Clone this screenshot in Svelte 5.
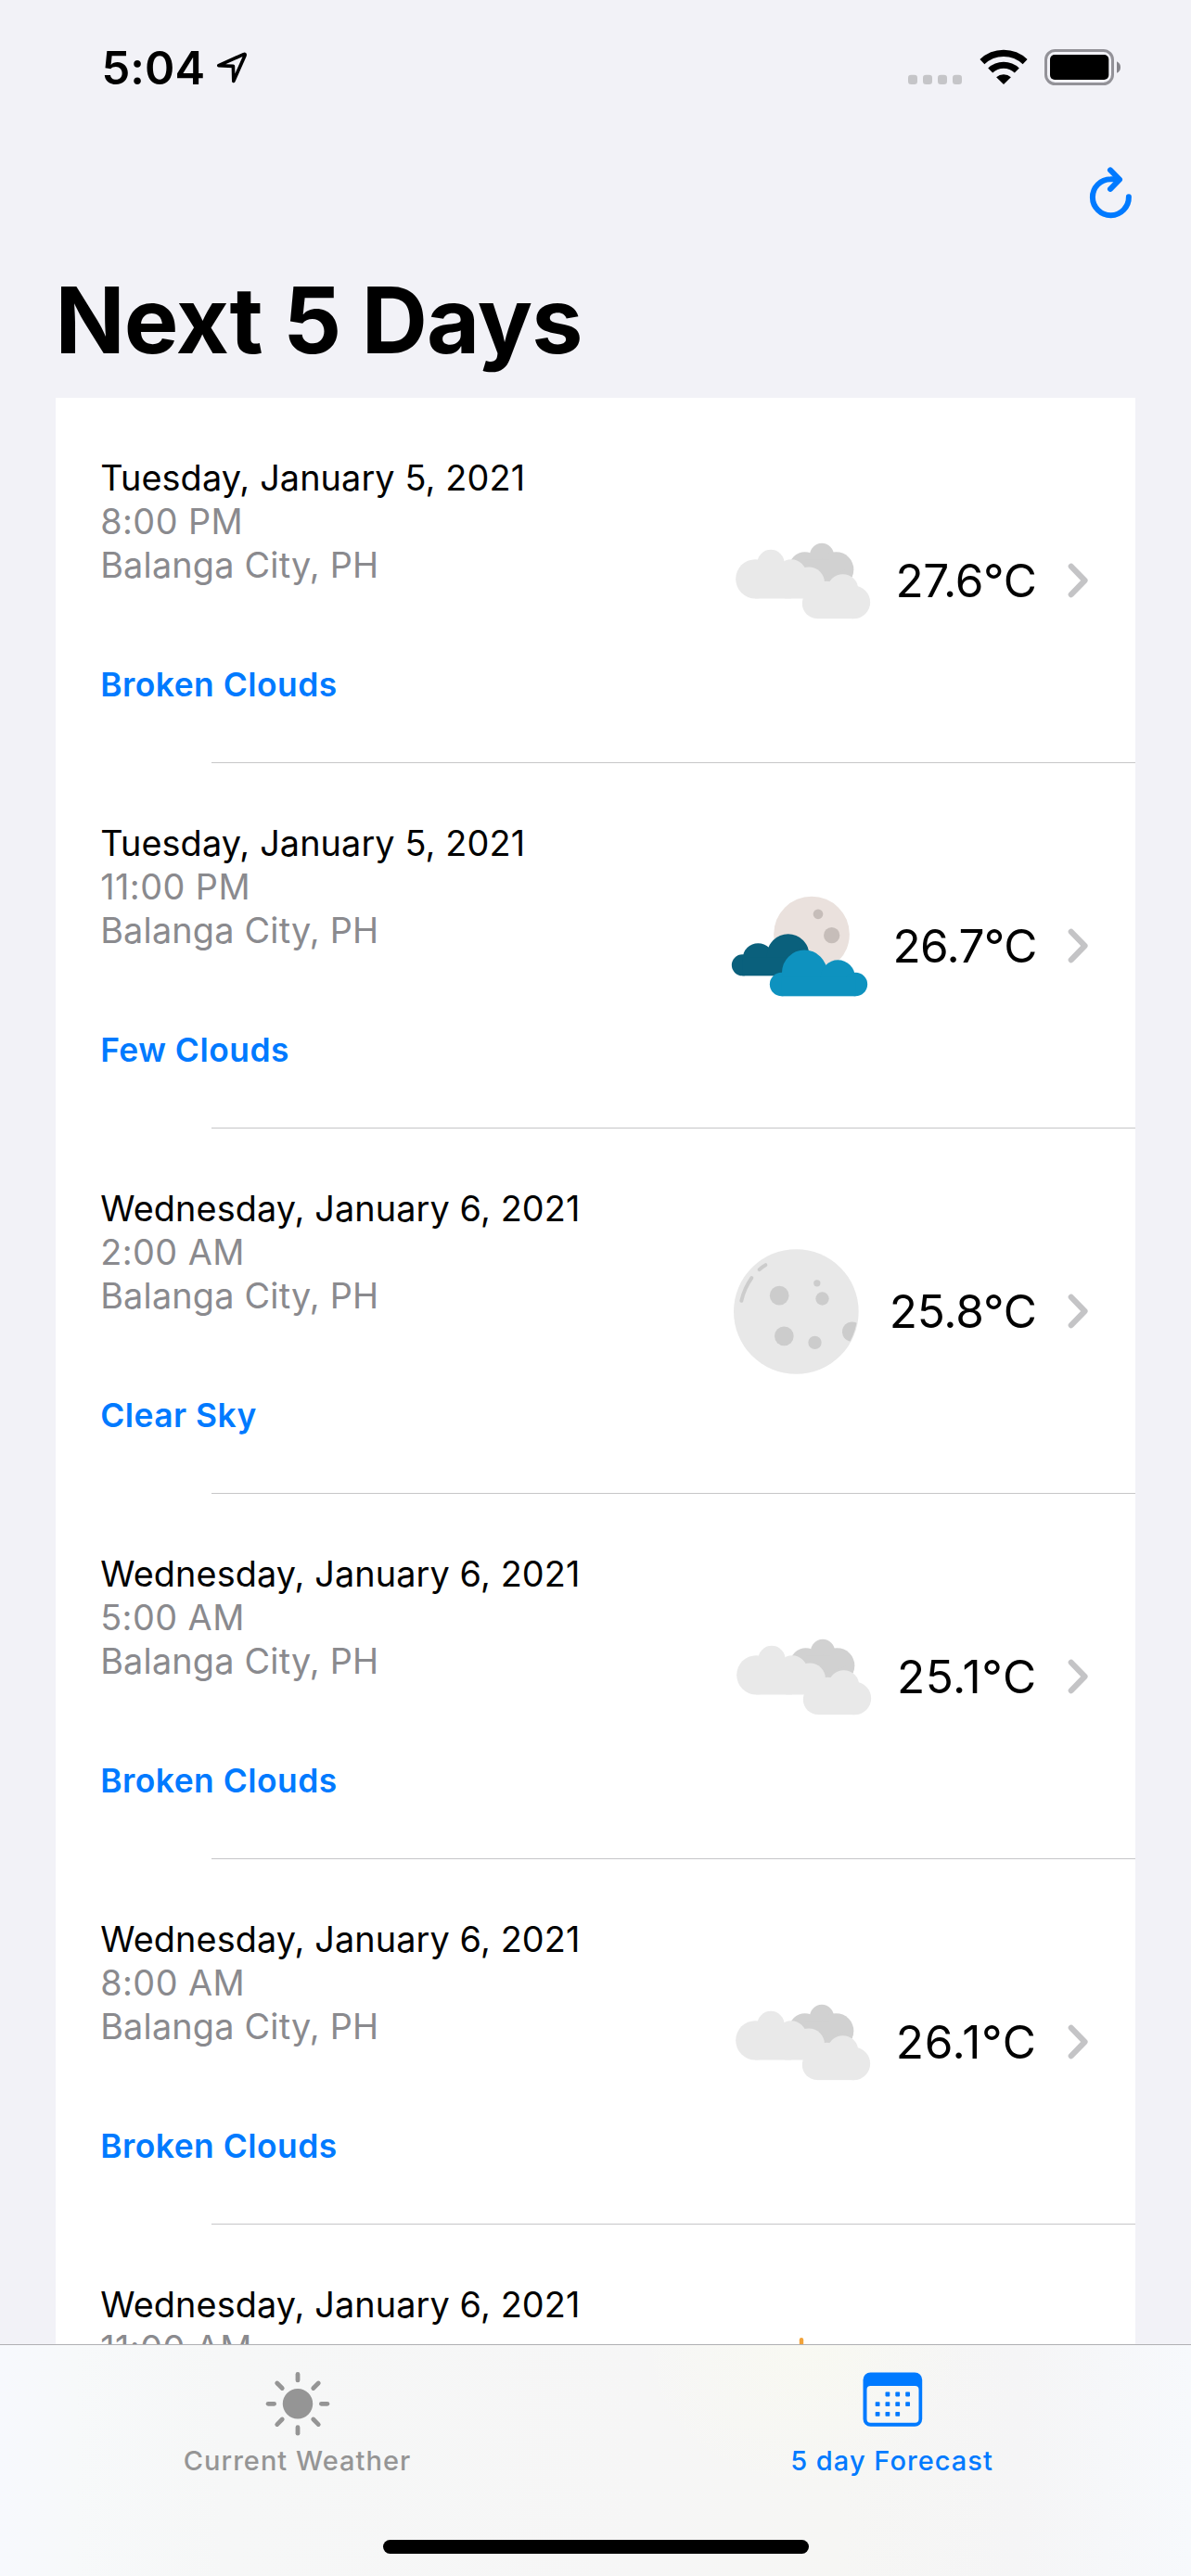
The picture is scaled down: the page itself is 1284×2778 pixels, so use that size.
<script>
  const place = 'Balanga City, PH';

  const forecast = [
    { date: 'Tuesday, January 5, 2021', time: '8:00 PM', sky: 'Broken Clouds', icon: 'broken', temp: '27.6°C', tracking: -0.26 },
    { date: 'Tuesday, January 5, 2021', time: '11:00 PM', sky: 'Few Clouds', icon: 'few', temp: '26.7°C', tracking: -0.62 },
    { date: 'Wednesday, January 6, 2021', time: '2:00 AM', sky: 'Clear Sky', icon: 'moon', temp: '25.8°C', tracking: -0.2 },
    { date: 'Wednesday, January 6, 2021', time: '5:00 AM', sky: 'Broken Clouds', icon: 'broken', temp: '25.1°C', tracking: 0.6 },
    { date: 'Wednesday, January 6, 2021', time: '8:00 AM', sky: 'Broken Clouds', icon: 'broken', temp: '26.1°C', tracking: 0.74 },
    { date: 'Wednesday, January 6, 2021', time: '11:00 AM', sky: 'Clear Sky', icon: 'sun', temp: '27.6°C', tracking: 0 }
  ];

  const rays = [0, 45, 90, 135, 180, 225, 270, 315];

  const calendarDots = [
    [956.4, 2582], [967.2, 2582], [978.1, 2582],
    [945.6, 2592.6], [956.4, 2592.6], [967.2, 2592.6], [978.1, 2592.6],
    [945.6, 2603.4], [956.4, 2603.4], [967.2, 2603.4]
  ];
</script>

<div class="screen">
  <div class="status">
    <span class="clock">5:04</span>
    <svg class="location" width="36" height="60" viewBox="232 44 36 60">
      <path d="M235.8 70.7 L262.6 58.6 Q264.7 57.9 264 60 L251.8 87.5 L251.4 71.4 Z" />
    </svg>
    <svg class="signal" width="58" height="60" viewBox="979 44 58 60">
      <rect x="979" y="80.7" width="10" height="10.3" rx="3.3" />
      <rect x="995" y="80.7" width="10" height="10.3" rx="3.3" />
      <rect x="1011" y="80.7" width="10" height="10.3" rx="3.3" />
      <rect x="1027" y="80.7" width="10" height="10.3" rx="3.3" />
    </svg>
    <svg class="wifi" width="52" height="60" viewBox="1055.5 44 52 60">
      <path class="arc" d="M1058.4 66.7 A33.5 33.5 0 0 1 1104.6 66.7" />
      <path class="arc" d="M1067.2 76 A20.7 20.7 0 0 1 1095.8 76" />
      <path d="M1081.5 91 L1073.6 83.2 A11.7 11.7 0 0 1 1089.4 83.2 Z" />
    </svg>
    <svg class="battery" width="83" height="60" viewBox="1126 44 83 60">
      <rect class="shell" x="1127.5" y="54.5" width="72" height="36" rx="10" />
      <rect x="1132" y="59" width="63.3" height="27" rx="5" />
      <path class="nub" d="M1204 66.3 Q1208 68.3 1208 72.5 Q1208 76.8 1204 78.8 Z" />
    </svg>
  </div>

  <div class="toolbar">
    <svg class="refresh" width="52" height="64" viewBox="1172 176 52 64">
      <path d="M1216.9 212.3 A19.5 19.5 0 1 1 1197.3 193.2 Q1202 193 1206 193.7" />
      <path d="M1197 183.4 L1207 193.6 L1197 203.8" />
    </svg>
  </div>

  <h1>Next 5 Days</h1>

  <ul class="list">
    {#each forecast as item}
      <li>
        <div class="row">
          <div class="info">
            <span class="date">{item.date}</span>
            <span class="sub time">{item.time}</span>
            <span class="sub">{place}</span>
            <span class="sky">{item.sky}</span>
          </div>
          {#if item.icon === 'broken'}
            <svg class="weather" viewBox="154 31.5 450 450">
              <g fill="#d1d1d1">
                <circle cx="439" cy="175" r="39" />
                <circle cx="384" cy="214" r="50" />
                <circle cx="485" cy="221" r="57" />
                <rect x="384" y="190" width="80" height="80" />
                <path d="M440 250 L541 212 Q543 226 537 243 L500 300 Z" />
              </g>
              <g fill="#e9e9e9">
                <circle cx="224" cy="251.5" r="63.5" />
                <circle cx="274" cy="201" r="44" />
                <circle cx="340" cy="237" r="49" />
                <circle cx="397" cy="264" r="51" />
                <rect x="224" y="200" width="116" height="115" />
                <rect x="320" y="250" width="90" height="65" />
                <circle cx="424" cy="331" r="48.5" />
                <circle cx="455" cy="300" r="41" />
                <circle cx="507" cy="286" r="50" />
                <circle cx="542" cy="327" r="53.5" />
                <rect x="424" y="290" width="118" height="90" />
              </g>
            </svg>
          {:else if item.icon === 'few'}
            <svg class="weather" viewBox="144 43.5 450 450">
              <circle cx="405" cy="231" r="122.5" fill="#eae1dd" />
              <g fill="#c6bdb9">
                <circle cx="426" cy="166" r="16" />
                <circle cx="470" cy="234.5" r="26" />
              </g>
              <g fill="#0a607c">
                <circle cx="181" cy="331" r="34.5" />
                <circle cx="232" cy="310" r="50" />
                <circle cx="329" cy="299" r="68.5" />
                <rect x="181" y="305" width="160" height="60.5" />
              </g>
              <g fill="#0e92bf">
                <circle cx="308" cy="393" r="38.5" />
                <circle cx="382" cy="355" r="73" />
                <circle cx="490" cy="370" r="55.5" />
                <circle cx="547" cy="393" r="38.5" />
                <rect x="308" y="370" width="239" height="61.5" />
              </g>
            </svg>
          {:else if item.icon === 'moon'}
            <svg class="weather" viewBox="134 85.5 450 450">
              <clipPath id="disc"><circle cx="357" cy="312" r="199" /></clipPath>
              <circle cx="357" cy="312" r="202" fill="#e8e8e8" />
              <g fill="#cccccc">
                <circle cx="302.5" cy="260" r="31" />
                <circle cx="424.5" cy="220" r="11" />
                <circle cx="441.5" cy="270" r="21.5" />
                <circle cx="318" cy="391" r="31" />
                <circle cx="417.5" cy="412" r="21.5" />
                <circle cx="538" cy="377" r="32" clip-path="url(#disc)" />
              </g>
              <g fill="none" stroke="#cccccc" stroke-width="12" stroke-linecap="round">
                <path d="M180 277 Q189 237 213 203" />
                <path d="M238 176 Q247 167 258 161" />
              </g>
            </svg>
          {:else}
            <svg class="weather" viewBox="0 0 150 150">
              <g stroke="#f2a33a" stroke-width="4.4" stroke-linecap="round">
                {#each rays as angle}
                  <line x1="75" y1="2.2" x2="75" y2="22" transform="rotate({angle} 75 75)" />
                {/each}
              </g>
              <circle cx="75" cy="75" r="40" fill="#f2a33a" />
            </svg>
          {/if}
          <span class="temp" style="letter-spacing: {item.tracking}px">{item.temp}</span>
          <svg class="chevron" width="24" height="44" viewBox="0 0 24 44">
            <path d="M4.8 6.8 L19.5 22 L4.8 37.2" />
          </svg>
        </div>
        <div class="separator"></div>
      </li>
    {/each}
  </ul>

  <nav class="tabbar">
    <div class="tabs">
      <div class="tab">
        <svg width="72" height="76" viewBox="284.5 2553 72 76">
          <circle cx="320.5" cy="2592.3" r="16.2" fill="currentColor" />
          <g stroke="currentColor" stroke-width="4.8" stroke-linecap="round">
            {#each rays as angle}
              <line
                x1="320.5"
                y1={angle % 90 ? 2560.8 : 2560.4}
                x2="320.5"
                y2={angle % 90 ? 2568.6 : 2566.9}
                transform="rotate({angle} 320.5 2592.3)"
              />
            {/each}
          </g>
        </svg>
        <span>Current Weather</span>
      </div>
      <div class="tab active">
        <svg width="72" height="76" viewBox="925.5 2553 72 76">
          <path
            fill="currentColor"
            fill-rule="evenodd"
            d="M938 2558.5 h47.7 a8 8 0 0 1 8 8 v42.3 a8 8 0 0 1 -8 8 h-47.7 a8 8 0 0 1 -8 -8 v-42.3 a8 8 0 0 1 8 -8 Z M938 2573 a4 4 0 0 0 -4 4 v31.7 a4 4 0 0 0 4 4 h48 a4 4 0 0 0 4 -4 v-31.7 a4 4 0 0 0 -4 -4 Z"
          />
          {#each calendarDots as [x, y]}
            <rect x={x - 2.4} y={y - 2.4} width="4.8" height="4.8" rx="0.8" fill="currentColor" />
          {/each}
        </svg>
        <span>5 day Forecast</span>
      </div>
    </div>
    <div class="home-indicator"></div>
  </nav>
</div>

<style>
  :global(body) {
    margin: 0;
    background: #f2f2f7;
  }

  .screen {
    display: flex;
    flex-direction: column;
    width: 1284px;
    height: 2778px;
    overflow: hidden;
    background: #f2f2f7;
    color: #000;
    font-family: Inter, 'Liberation Sans', sans-serif;
  }

  svg {
    display: block;
    flex: none;
  }

  .status {
    display: flex;
    flex: none;
    height: 60px;
    padding: 44px 75px 0 109.4px;
  }

  .clock {
    width: 122.6px;
    font-size: 49px;
    font-weight: 600;
    line-height: 59px;
    letter-spacing: 0.1px;
  }

  .location {
    fill: none;
    stroke: #000;
    stroke-width: 3.6;
    stroke-linejoin: round;
  }

  .signal {
    margin-left: auto;
    fill: #c5c5c8;
  }

  .wifi {
    margin-left: 18.5px;
  }

  .arc {
    fill: none;
    stroke: #000;
    stroke-width: 7.2;
  }

  .battery {
    margin-left: 18.5px;
  }

  .shell {
    fill: none;
    stroke: #939298;
    stroke-width: 3;
  }

  .nub {
    fill: #85848a;
  }

  .toolbar {
    display: flex;
    flex: none;
    justify-content: flex-end;
    height: 109px;
    padding: 72px 60px 0 0;
  }

  .refresh {
    fill: none;
    stroke: #007aff;
    stroke-width: 6;
    stroke-linecap: round;
    stroke-linejoin: round;
  }

  h1 {
    flex: none;
    margin: 0 0 24px 59.6px;
    font-size: 98.6px;
    font-weight: 700;
    line-height: 120px;
    letter-spacing: -0.88px;
  }

  .list {
    flex: 1;
    min-height: 0;
    margin: 0 60px;
    padding: 0;
    overflow: hidden;
    background: #fff;
    list-style: none;
  }

  .row {
    display: flex;
    align-items: center;
    box-sizing: border-box;
    height: 393px;
    padding: 0 50px 0 48.2px;
  }

  .separator {
    height: 1px;
    margin-left: 168px;
    background: #c6c6c8;
  }

  .info {
    display: flex;
    flex: 1;
    flex-direction: column;
    align-self: flex-start;
    padding-top: 63px;
    font-size: 37.8px;
    line-height: 47px;
    white-space: nowrap;
  }

  .date {
    letter-spacing: 0.12px;
  }

  .sub {
    color: #8a8a8e;
    letter-spacing: 0.2px;
  }

  .time {
    letter-spacing: 0.45px;
  }

  .sky {
    margin-top: 84px;
    color: #007aff;
    font-size: 35.4px;
    font-weight: 600;
    line-height: 43px;
    letter-spacing: 0.5px;
  }

  .weather {
    width: 150px;
    height: 150px;
  }

  .temp {
    margin: 0 32.3px 0 24.4px;
    font-size: 49.5px;
    line-height: 60px;
    white-space: nowrap;
  }

  .chevron {
    fill: none;
    stroke: #c4c4c6;
    stroke-width: 6.2;
    stroke-linecap: round;
    stroke-linejoin: round;
  }

  .tabbar {
    display: flex;
    flex: none;
    flex-direction: column;
    align-items: center;
    box-sizing: border-box;
    height: 250px;
    padding-bottom: 24px;
    border-top: 1px solid #b0b0b3;
    background:
      radial-gradient(ellipse 180px 160px at 865px 0, rgba(250, 251, 240, 0.55), transparent),
      linear-gradient(90deg, #f7f9fd 0, #f7f9fa 80px, #f6f7f7 240px, #f6f6f6 700px, #f6f6f4 900px, #f5f5f6 1100px, #f7f9fc 1284px);
  }

  .tabs {
    display: flex;
    align-self: stretch;
    padding: 24px 2px 0 0;
  }

  .tab {
    display: flex;
    flex: 1;
    flex-direction: column;
    align-items: center;
    gap: 7px;
    color: #959595;
    font-size: 29px;
    font-weight: 500;
    line-height: 36px;
    letter-spacing: 1.03px;
  }

  .active {
    color: #007aff;
  }

  .home-indicator {
    width: 459px;
    height: 15px;
    margin-top: auto;
    border-radius: 8px;
    background: #000;
  }
</style>
